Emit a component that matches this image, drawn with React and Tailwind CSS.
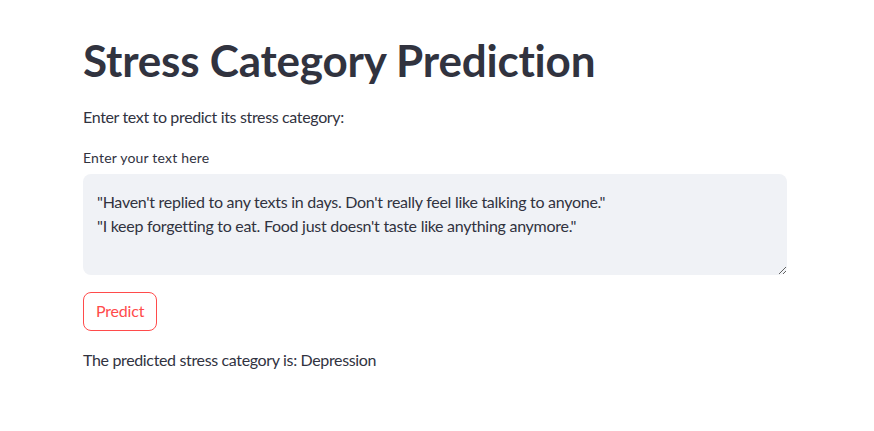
import React from "react";

const App = () => {
  return (
    <div
      className="min-h-screen bg-white text-[#31333F]"
      style={{ fontFamily: "Lato, 'Liberation Sans', sans-serif" }}
    >
      <div className="w-[704px] ml-[83px] pt-[34px]">
        <h1 className="text-[44px] font-bold leading-[1.2] tracking-[-0.2px]">
          Stress Category Prediction
        </h1>

        <p className="mt-[18px] text-[16px] leading-[24px] tracking-[-0.35px]">
          Enter text to predict its stress category:
        </p>

        <label className="block mt-[19px] text-[14px] leading-[20px] tracking-[0.2px]">
          Enter your text here
        </label>

        <textarea
          className="mt-[6px] block w-full h-[101px] bg-[#F0F2F6] rounded-lg px-[14px] pt-[16px] text-[16px] leading-[24px] tracking-[-0.27px] text-[#31333F] outline-none"
          defaultValue={
            '"Haven\'t replied to any texts in days. Don\'t really feel like talking to anyone."\n"I keep forgetting to eat. Food just doesn\'t taste like anything anymore."'
          }
        />

        <button className="mt-[17px] h-[39px] px-[12px] border border-[#FF4B4B] rounded-lg text-[#FF4B4B] text-[16px] tracking-[-0.2px] bg-white">
          Predict
        </button>

        <p className="mt-[17px] text-[16px] leading-[24px] tracking-[-0.35px]">
          The predicted stress category is: Depression
        </p>
      </div>
    </div>
  );
};

export default App;
